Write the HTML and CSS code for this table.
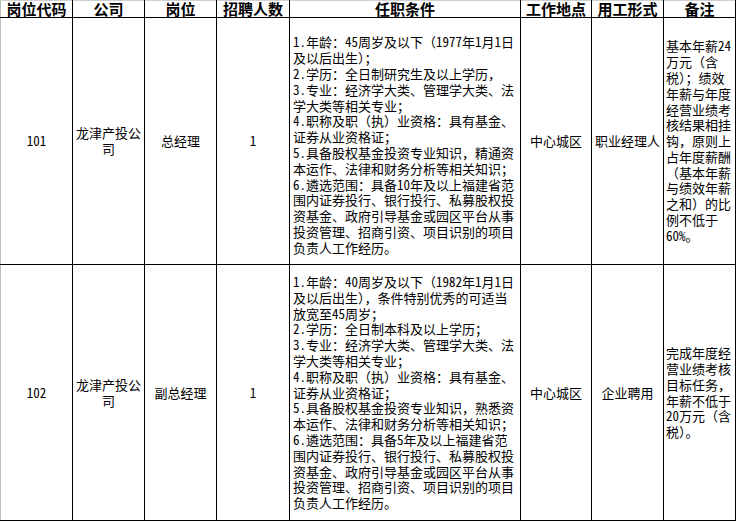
FILE: index.html
```html
<!DOCTYPE html>
<html lang="zh-CN">
<head>
<meta charset="utf-8">
<title>岗位表</title>
<link rel="stylesheet" href="styles.css">
</head>
<body>
<table class="jobs">
  <colgroup>
    <col class="c-code"><col class="c-co"><col class="c-pos"><col class="c-num"><col class="c-req"><col class="c-loc"><col class="c-type"><col class="c-note">
  </colgroup>
  <thead>
    <tr class="head">
      <th>岗位代码</th><th>公司</th><th>岗位</th><th>招聘人数</th><th>任职条件</th><th>工作地点</th><th>用工形式</th><th>备注</th>
    </tr>
  </thead>
  <tbody>
    <tr class="row1">
      <td class="ctr">101</td>
      <td class="ctr">龙津产投公<br>司</td>
      <td class="ctr">总经理</td>
      <td class="ctr">1</td>
      <td class="req req1">1.年龄：45周岁及以下（1977年1月1日<br>及以后出生）；<br>2.学历：全日制研究生及以上学历，<br>3.专业：经济学大类、管理学大类、法<br>学大类等相关专业；<br>4.职称及职（执）业资格：具有基金、<br>证券从业资格证；<br>5.具备股权基金投资专业知识，精通资<br>本运作、法律和财务分析等相关知识；<br>6.遴选范围：具备10年及以上福建省范<br>围内证券投行、银行投行、私募股权投<br>资基金、政府引导基金或园区平台从事<br>投资管理、招商引资、项目识别的项目<br>负责人工作经历。</td>
      <td class="ctr">中心城区</td>
      <td class="ctr">职业经理人</td>
      <td class="note">基本年薪24<br>万元（含<br>税）；绩效<br>年薪与年度<br>经营业绩考<br>核结果相挂<br>钩，原则上<br>占年度薪酬<br>（基本年薪<br>与绩效年薪<br>之和）的比<br>例不低于<br>60%。</td>
    </tr>
    <tr class="row2">
      <td class="ctr">102</td>
      <td class="ctr">龙津产投公<br>司</td>
      <td class="ctr">副总经理</td>
      <td class="ctr">1</td>
      <td class="req">1.年龄：40周岁及以下（1982年1月1日<br>及以后出生），条件特别优秀的可适当<br>放宽至45周岁；<br>2.学历：全日制本科及以上学历；<br>3.专业：经济学大类、管理学大类、法<br>学大类等相关专业；<br>4.职称及职（执）业资格：具有基金、<br>证券从业资格证；<br>5.具备股权基金投资专业知识，熟悉资<br>本运作、法律和财务分析等相关知识；<br>6.遴选范围：具备5年及以上福建省范<br>围内证券投行、银行投行、私募股权投<br>资基金、政府引导基金或园区平台从事<br>投资管理、招商引资、项目识别的项目<br>负责人工作经历。</td>
      <td class="ctr">中心城区</td>
      <td class="ctr">企业聘用</td>
      <td class="note">完成年度经<br>营业绩考核<br>目标任务，<br>年薪不低于<br>20万元（含<br>税）。</td>
    </tr>
  </tbody>
</table>
</body>
</html>
```

FILE: styles.css
```css
html, body {
  margin: 0;
  padding: 0;
  background: #ffffff;
}

.jobs {
  border-collapse: collapse;
  table-layout: fixed;
  width: 736px;
  font-family: "Noto Sans Mono CJK SC", "Liberation Serif", "Noto Sans CJK SC", sans-serif;
  font-size: 13px;
  line-height: 15.8px;
  color: #000;
}

.c-code { width: 72px; }
.c-co { width: 72px; }
.c-pos { width: 72px; }
.c-num { width: 73px; }
.c-req { width: 231px; }
.c-loc { width: 71px; }
.c-type { width: 72px; }
.c-note { width: 72px; }

.jobs th,
.jobs td {
  border: 1px solid #000;
  padding: 0;
  vertical-align: middle;
}

.jobs .head th { border-top: 1px solid #cfcfcf; }
.jobs th:first-child,
.jobs td:first-child { border-left: 1px solid #bdbdbd; }

.head th {
  height: 16px;
  font-family: "Noto Sans CJK SC", sans-serif;
  font-size: 15px;
  font-weight: 700;
  line-height: 16px;
  text-align: center;
  white-space: nowrap;
}

.row1 td { height: 246px; }
.row2 td { height: 255px; }

.ctr {
  text-align: center;
  white-space: nowrap;
}

.req {
  text-align: left;
  padding-left: 3px !important;
  white-space: nowrap;
}

.jobs .row1 .req1 {
  height: 238px;
  padding-top: 8px;
}

.note {
  text-align: left;
  padding-left: 2px !important;
  white-space: nowrap;
}
```
